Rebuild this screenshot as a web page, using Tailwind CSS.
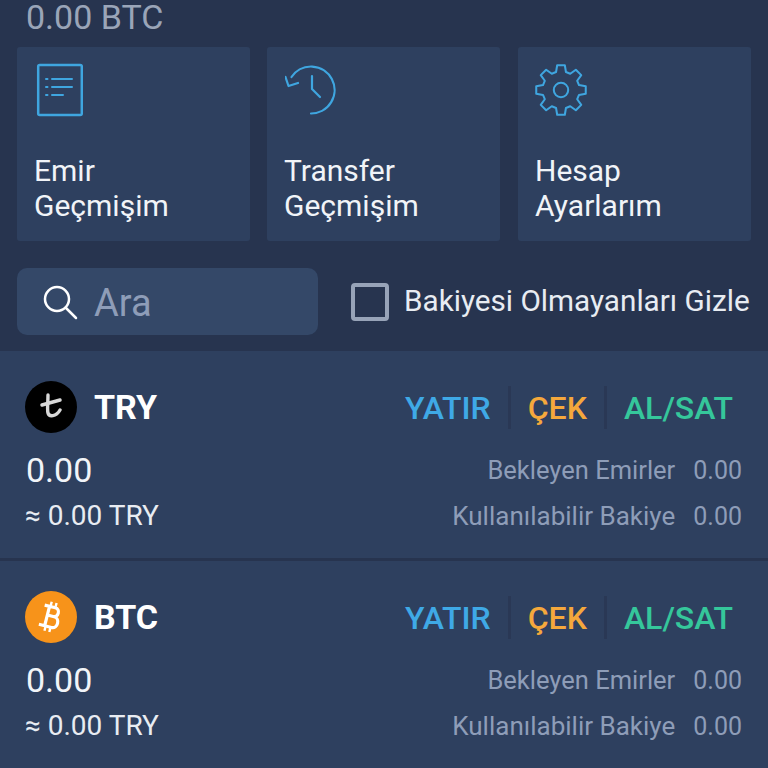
<!DOCTYPE html>
<html lang="tr">
<head>
    <meta charset="UTF-8">
    <meta name="viewport" content="width=device-width, initial-scale=1.0">
    <title>Cüzdan</title>
    <script src="https://cdn.jsdelivr.net/npm/@tailwindcss/browser@4"></script>
</head>
<body class="bg-[#27344f] text-white font-['Roboto',sans-serif] h-[768px] overflow-hidden">
    <!-- Total balance -->
    <div class="h-[47px] pl-[26px] text-[34px] leading-[34px] text-[#9aa5b8]">0.00 BTC</div>

    <!-- Shortcut cards -->
    <div class="flex pl-[17px]">
        <div class="w-[233px] h-[194px] bg-[#2e405f] rounded-[3px] pl-[17px] pt-[16px]">
            <svg class="w-[48px] h-[54px] block ml-[1px]" viewBox="0 0 48 54" fill="none" stroke="#3fa6e0" stroke-width="2.5" stroke-linecap="round" stroke-linejoin="round">
                <rect x="3.2" y="2" width="43.6" height="50" rx="1.5"/>
                <path d="M11 16h1.5M11 24h1.5M11 32h1.5" stroke-width="2"/>
                <path d="M17 16h20M17 24h20M17 32h11" stroke-width="2"/>
            </svg>
            <p class="mt-[36px] text-[30px] leading-[35px] text-[#f1f4f8]">Emir<br>Geçmişim</p>
        </div>
        <div class="w-[233px] h-[194px] ml-[17px] bg-[#2e405f] rounded-[3px] pl-[17px] pt-[16px]">
            <svg class="w-[54px] h-[54px] block ml-[1px]" viewBox="0 0 54 54" fill="none" stroke="#3fa6e0" stroke-width="2.2" stroke-linecap="round" stroke-linejoin="round">
                <path d="M6.500 14A23.500 23.500 0 1 1 26 50.500"/>
                <path d="M0.500 14l3 9 9.500-3"/>
                <path d="M27 13v13l8 8"/>
            </svg>
            <p class="mt-[36px] text-[30px] leading-[35px] text-[#f1f4f8]">Transfer<br>Geçmişim</p>
        </div>
        <div class="w-[233px] h-[194px] ml-[18px] bg-[#2e405f] rounded-[3px] pl-[17px] pt-[16px]">
            <svg class="w-[54px] h-[54px] block ml-[-1px]" viewBox="0 0 24 24" fill="none" stroke="#3fa6e0" stroke-width="0.9" stroke-linecap="round" stroke-linejoin="round">
                <circle cx="12" cy="12" r="3.2"/>
                <path d="M10.300 1h3.400l.5 3 1.900.8 2.500-1.800 2.400 2.400-1.800 2.500.8 1.900 3 .5v3.400l-3 .5-.8 1.900 1.800 2.500-2.400 2.400-2.500-1.800-1.900.8-.5 3h-3.400l-.5-3-1.900-.8-2.500 1.800-2.400-2.400 1.800-2.500-.8-1.900-3-.5v-3.400l3-.5.8-1.900-1.800-2.500 2.400-2.400 2.500 1.800 1.900-.8z"/>
            </svg>
            <p class="mt-[36px] text-[30px] leading-[35px] text-[#f1f4f8]">Hesap<br>Ayarlarım</p>
        </div>
    </div>

    <!-- Search and filter -->
    <div class="flex items-center h-[67px] mt-[27px] mb-[16px] pl-[17px]">
        <div class="w-[301px] h-[67px] bg-[#344868] rounded-[10px] flex items-center pl-[25px]">
            <svg class="w-[36px] h-[36px]" viewBox="0 0 36 36" fill="none" stroke="#fff" stroke-width="2.5" stroke-linecap="round">
                <circle cx="15" cy="15" r="12"/>
                <path d="M24 24l10 10"/>
            </svg>
            <span class="ml-[16px] pt-[4px] text-[38px] text-[#8e9db8]">Ara</span>
        </div>
        <div class="ml-[33px] w-[38px] h-[38px] border-[4px] border-[#97a3b8] rounded-[4px]"></div>
        <span class="ml-[15px] text-[29.7px] text-[#e8ecf2] whitespace-nowrap">Bakiyesi Olmayanları Gizle</span>
    </div>

    <!-- TRY row -->
    <div class="h-[207px] bg-[#2e405f] pl-[25px] pr-[26px] pt-[30px]">
        <div class="flex items-center h-[52px]">
            <div class="w-[52px] h-[52px] rounded-full bg-black flex items-center justify-center">
                <svg class="w-[22px] h-[28px]" viewBox="0 0 22 28" fill="none" stroke="#d8d8d8" stroke-width="3.4" stroke-linecap="round" stroke-linejoin="round">
                    <path d="M8 2C8 10 7 17 8 20c1 4 8 4 12-3"/>
                    <path d="M2 12l18-5"/>
                </svg>
            </div>
            <span class="ml-[17px] text-[34px] font-bold">TRY</span>
            <div class="ml-auto flex items-center text-[32px] font-medium pr-[9px]">
                <span class="pt-[2px] text-[#3fa9e6]">YATIR</span>
                <div class="w-[3px] h-[43px] bg-[#2a3855] mx-[17px]"></div>
                <span class="pt-[2px] text-[#f5a83c]">ÇEK</span>
                <div class="w-[3px] h-[43px] bg-[#2a3855] mx-[17px]"></div>
                <span class="pt-[2px] text-[#35c79b]">AL/SAT</span>
            </div>
        </div>
        <div class="flex justify-between items-center h-[46px] mt-[14px] pl-[1px]">
            <span class="text-[34px] text-[#f1f4f8]">0.00</span>
            <span class="text-[25.5px] text-[#8e9db8]">Bekleyen Emirler<span class="ml-[18px] text-[25px]">0.00</span></span>
        </div>
        <div class="flex justify-between items-center h-[46px]">
            <span class="text-[28px] text-[#e8ecf2]">≈ 0.00 TRY</span>
            <span class="text-[26px] text-[#8e9db8]">Kullanılabilir Bakiye<span class="ml-[18px] text-[25px]">0.00</span></span>
        </div>
    </div>

    <div class="h-[3px] bg-[#27344f]"></div>

    <!-- BTC row -->
    <div class="h-[207px] bg-[#2e405f] pl-[25px] pr-[26px] pt-[30px]">
        <div class="flex items-center h-[52px]">
            <div class="w-[52px] h-[52px] rounded-full bg-[#f7931a] flex items-center justify-center">
                <svg class="w-[26px] h-[34px]" viewBox="0 0 26 34" fill="none" stroke="#fff" stroke-width="3.2" stroke-linejoin="round">
                    <g transform="rotate(14 13 17)">
                        <path d="M9 7v20M4 7h11c5.500 0 5.500 9 0 9H9M9 16h7c6.500 0 6.500 11 0 11H3"/>
                        <path d="M10 2v4M15 2v4M10 28v4M15 28v4" stroke-width="2.400"/>
                    </g>
                </svg>
            </div>
            <span class="ml-[17px] text-[34px] font-bold">BTC</span>
            <div class="ml-auto flex items-center text-[32px] font-medium pr-[9px]">
                <span class="pt-[2px] text-[#3fa9e6]">YATIR</span>
                <div class="w-[3px] h-[43px] bg-[#2a3855] mx-[17px]"></div>
                <span class="pt-[2px] text-[#f5a83c]">ÇEK</span>
                <div class="w-[3px] h-[43px] bg-[#2a3855] mx-[17px]"></div>
                <span class="pt-[2px] text-[#35c79b]">AL/SAT</span>
            </div>
        </div>
        <div class="flex justify-between items-center h-[46px] mt-[14px] pl-[1px]">
            <span class="text-[34px] text-[#f1f4f8]">0.00</span>
            <span class="text-[25.5px] text-[#8e9db8]">Bekleyen Emirler<span class="ml-[18px] text-[25px]">0.00</span></span>
        </div>
        <div class="flex justify-between items-center h-[46px]">
            <span class="text-[28px] text-[#e8ecf2]">≈ 0.00 TRY</span>
            <span class="text-[26px] text-[#8e9db8]">Kullanılabilir Bakiye<span class="ml-[18px] text-[25px]">0.00</span></span>
        </div>
    </div>
</body>
</html>
